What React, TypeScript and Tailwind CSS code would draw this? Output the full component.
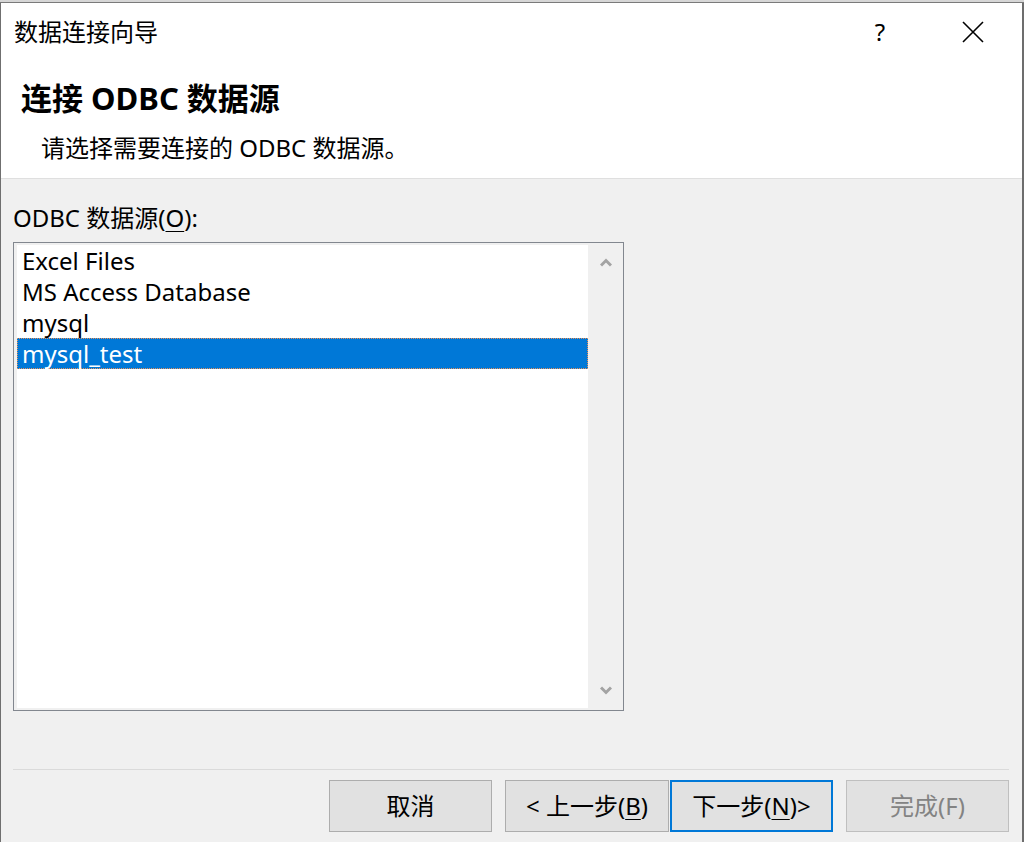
import React from "react";

const items = ["Excel Files", "MS Access Database", "mysql", "mysql_test"];

function ChevronUp() {
  return (
    <svg width="12" height="9" viewBox="0 0 12 9">
      <path d="M1 7.5 L6 2.5 L11 7.5" fill="none" stroke="#a3a3a3" strokeWidth="3" strokeLinejoin="miter" />
    </svg>
  );
}
function ChevronDown() {
  return (
    <svg width="12" height="9" viewBox="0 0 12 9">
      <path d="M1 1.5 L6 6.5 L11 1.5" fill="none" stroke="#a3a3a3" strokeWidth="3" strokeLinejoin="miter" />
    </svg>
  );
}

export default function App() {
  return (
    <div className="w-[1024px] h-[842px] overflow-hidden bg-[#f0f0f0] flex flex-col font-['Noto_Sans','Noto_Sans_CJK_SC',sans-serif] text-black">
      <div className="h-[3px] shrink-0 bg-[#d6d6d6] border-b border-[#7a7a7a]" />
      <div className="flex-1 flex flex-col border-l border-[#6f6f6f] border-r-2 border-r-[#6d6d6d] bg-[#f0f0f0]">
        {/* Title bar */}
        <div className="h-[57px] shrink-0 bg-white flex items-center pl-[13px]">
          <span className="text-[24px] leading-[32px] flex-1">数据连接向导</span>
          <span className="text-[24px] leading-[32px] w-[20px] text-center mr-[72px]">?</span>
          <svg width="22" height="22" viewBox="0 0 22 22" className="mr-[38px]">
            <path d="M1 1 L21 21 M21 1 L1 21" stroke="#000" strokeWidth="1.6" />
          </svg>
        </div>
        {/* Header */}
        <div className="shrink-0 bg-white border-b border-[#dfdfdf] pt-[20px] pb-[14px]">
          <div className="pl-[20px] text-[31px] leading-[36px] font-bold">连接 ODBC 数据源</div>
          <div className="pl-[40px] mt-[16px] text-[24px] leading-[32px]">请选择需要连接的 ODBC 数据源。</div>
        </div>
        {/* Body */}
        <div className="flex-1 flex flex-col pl-[12px]">
          <div className="mt-[23px] text-[24px] leading-[32px]">
            ODBC 数据源(<span className="underline underline-offset-[4px] decoration-1">O</span>):
          </div>
          <div className="mt-[8px] w-[611px] h-[469px] border border-[#82878f] bg-[#f0f0f0] flex pt-[2px] pl-[3px] pb-[2px]">
            <div className="flex-1 bg-white flex flex-col">
              {items.map((it, i) => (
                <div
                  key={it}
                  className={
                    i === 3
                      ? "h-[31px] flex items-center pl-[4px] bg-[#0078d7] text-white text-[24px] border border-dotted border-[#e8915a]"
                      : "h-[31px] flex items-center pl-[5px] text-[24px]"
                  }
                >
                  {it}
                </div>
              ))}
            </div>
            <div className="w-[35px] flex flex-col items-center justify-between pt-[13px] pb-[13px]">
              <ChevronUp />
              <ChevronDown />
            </div>
          </div>
          <div className="mt-[58px] w-[996px] h-px bg-[#dadada]" />
          <div className="mt-[10px] w-[996px] flex justify-end">
            <button className="w-[163px] h-[52px] bg-[#e1e1e1] border border-[#adadad] text-[24px] flex items-center justify-center">
              取消
            </button>
            <button className="ml-[13px] w-[164px] h-[52px] bg-[#e1e1e1] border border-[#adadad] text-[24px] flex items-center justify-center">
              &lt; 上一步(<span className="underline underline-offset-[4px] decoration-1">B</span>)
            </button>
            <button className="ml-[1px] w-[163px] h-[52px] bg-[#e1e1e1] border-2 border-[#0078d7] text-[24px] flex items-center justify-center">
              下一步(<span className="underline underline-offset-[4px] decoration-1">N</span>)&gt;
            </button>
            <button className="ml-[13px] w-[163px] h-[52px] bg-[#e1e1e1] border border-[#bfbfbf] text-[#838383] text-[24px] flex items-center justify-center">
              完成(F)
            </button>
          </div>
        </div>
      </div>
    </div>
  );
}
